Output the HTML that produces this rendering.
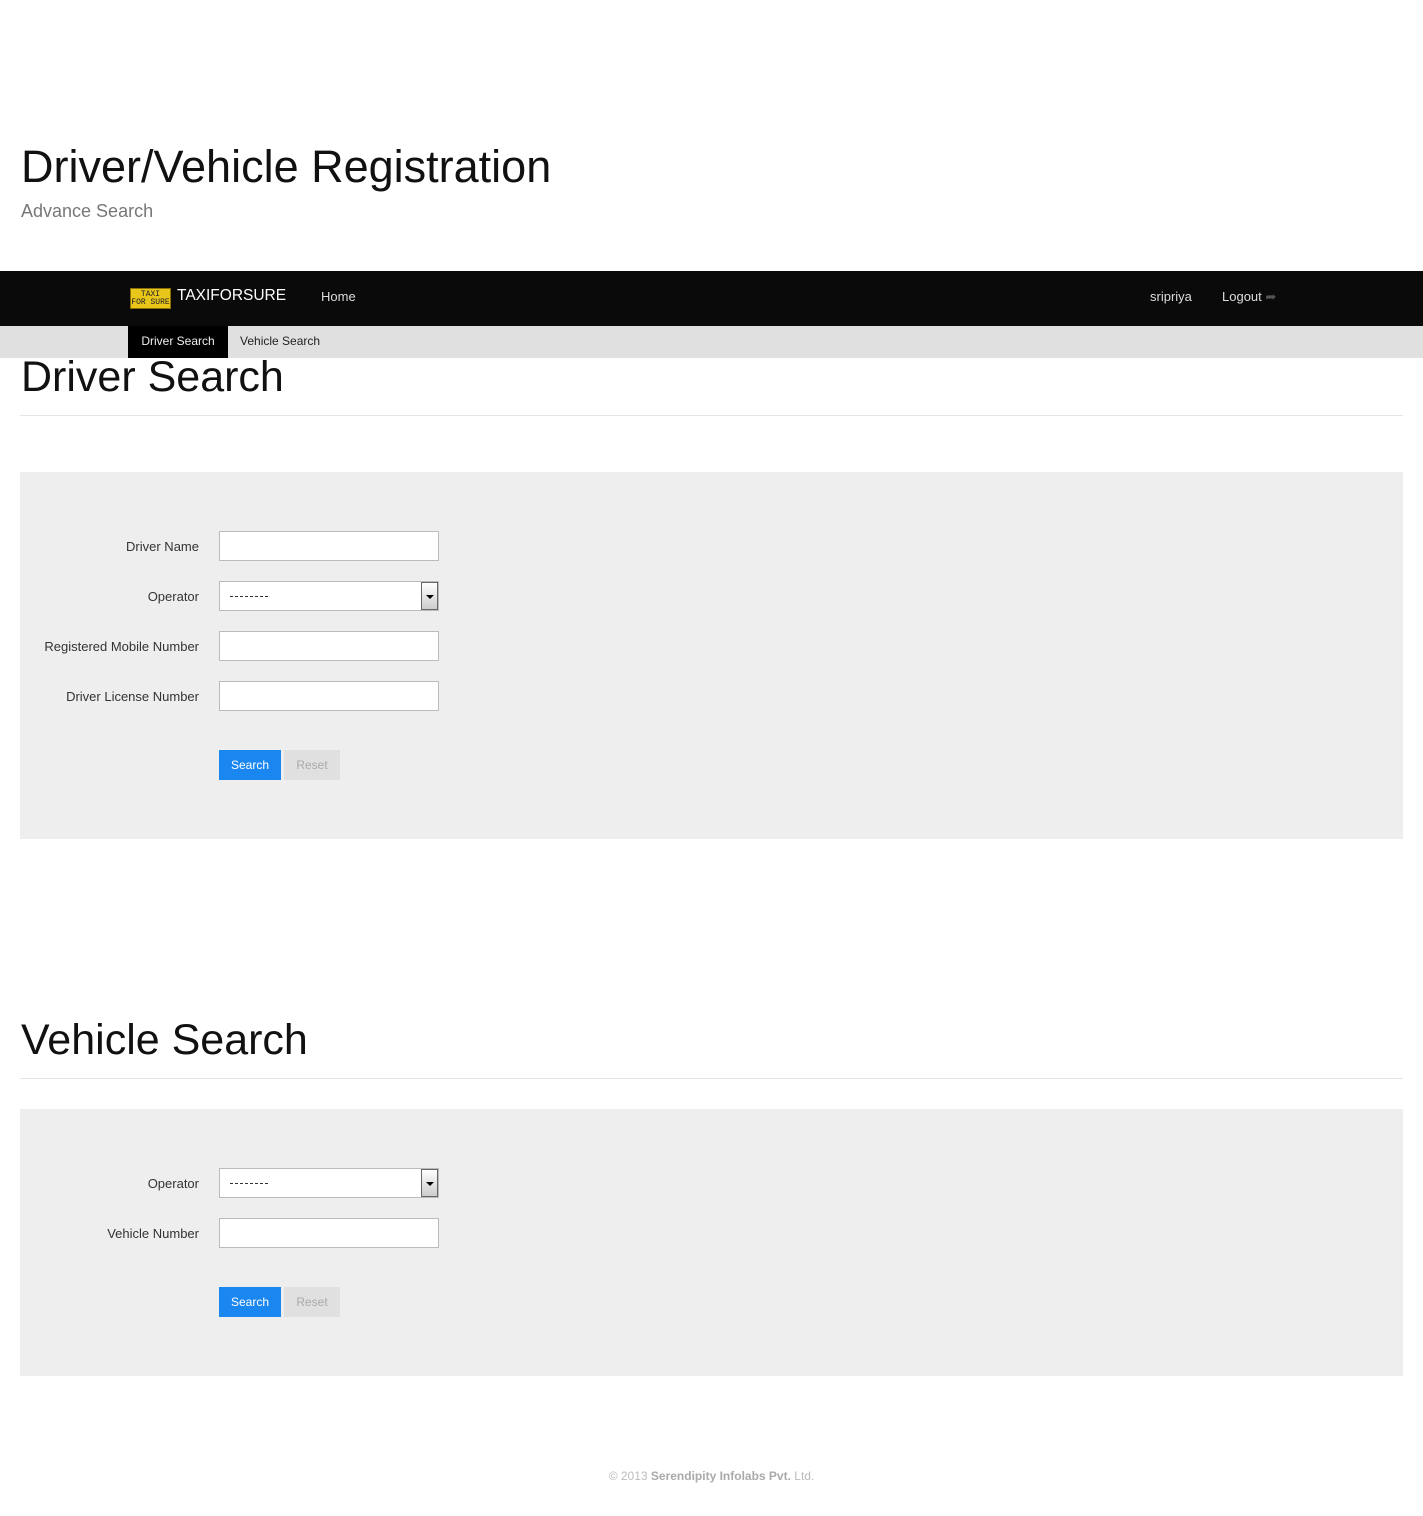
<!DOCTYPE html>
<html><head><style>
*{margin:0;padding:0;box-sizing:border-box}
body{width:1423px;height:1516px;background:#fff;font-family:"Liberation Sans",sans-serif;position:relative;overflow:hidden}
.abs{position:absolute}
h1{position:absolute;font-weight:normal;color:#111;white-space:nowrap}
.lbl{position:absolute;font-size:13px;color:#333;text-align:right;width:180px;left:19px;white-space:nowrap}
.inp{position:absolute;left:219px;width:220px;height:30px;background:#fff;border:1px solid #bbb}
.sel .arr{position:absolute;right:0;top:0;width:17px;height:28px;border:1px solid #666;background:linear-gradient(#fff,#ccc)}
.sel .arr:after{content:"";position:absolute;left:4px;top:12px;border:4px solid transparent;border-top:4px solid #000;border-bottom:0}
.sel .dash{position:absolute;left:10px;top:14px;width:38px;border-top:1px dashed #333}
.btn{position:absolute;height:30px;font-size:12px;line-height:30px;text-align:center}
</style></head><body>
<h1 style="left:21px;top:141px;font-size:45px">Driver/Vehicle Registration</h1>
<div class="abs" style="left:21px;top:201px;font-size:18px;color:#777">Advance Search</div>
<div class="abs" style="left:0;top:271px;width:1423px;height:55px;background:#0a0a0a"></div>
<div class="abs" style="left:130px;top:288px;width:41px;height:21px;background:#e8c61a;border:1px solid #8a7000;font-size:8px;line-height:8px;text-align:center;color:#222;font-family:'Liberation Mono',monospace;padding-top:2px">TAXI<br>FOR SURE</div>
<div class="abs" style="left:177px;top:287px;font-size:15.5px;color:#fff">TAXIFORSURE</div>
<div class="abs" style="left:321px;top:289px;font-size:13px;color:#ddd">Home</div>
<div class="abs" style="left:1150px;top:289px;font-size:13px;color:#ddd">sripriya</div>
<div class="abs" style="left:1222px;top:289px;font-size:13px;color:#ddd">Logout <span style="color:#555">&#10150;</span></div>
<div class="abs" style="left:0;top:326px;width:1423px;height:32px;background:#e0e0e0"></div>
<div class="abs" style="left:128px;top:326px;width:100px;height:32px;background:#000;color:#eee;font-size:12px;line-height:30px;text-align:center">Driver Search</div>
<div class="abs" style="left:240px;top:326px;height:32px;color:#222;font-size:12px;line-height:30px">Vehicle Search</div>
<h1 style="left:21px;top:353px;font-size:43px">Driver Search</h1>
<div class="abs" style="left:20px;top:415px;width:1383px;border-top:1px solid #e5e5e5"></div>
<div class="abs" style="left:20px;top:472px;width:1383px;height:367px;background:#eee"></div>
<div class="lbl" style="top:539px">Driver Name</div><div class="inp" style="top:531px"></div>
<div class="lbl" style="top:589px">Operator</div><div class="inp sel" style="top:581px"><div class="dash"></div><div class="arr"></div></div>
<div class="lbl" style="top:639px">Registered Mobile Number</div><div class="inp" style="top:631px"></div>
<div class="lbl" style="top:689px">Driver License Number</div><div class="inp" style="top:681px"></div>
<div class="btn" style="left:219px;top:750px;width:62px;background:#1a87f0;color:#fff">Search</div>
<div class="btn" style="left:284px;top:750px;width:56px;background:#e0e0e0;color:#aaa">Reset</div>
<h1 style="left:21px;top:1016px;font-size:43px">Vehicle Search</h1>
<div class="abs" style="left:20px;top:1078px;width:1383px;border-top:1px solid #e5e5e5"></div>
<div class="abs" style="left:20px;top:1109px;width:1383px;height:267px;background:#eee"></div>
<div class="lbl" style="top:1176px">Operator</div><div class="inp sel" style="top:1168px"><div class="dash"></div><div class="arr"></div></div>
<div class="lbl" style="top:1226px">Vehicle Number</div><div class="inp" style="top:1218px"></div>
<div class="btn" style="left:219px;top:1287px;width:62px;background:#1a87f0;color:#fff">Search</div>
<div class="btn" style="left:284px;top:1287px;width:56px;background:#e0e0e0;color:#aaa">Reset</div>
<div class="abs" style="left:0;width:1423px;top:1469px;text-align:center;font-size:12px;color:#bbb">© 2013 <b style="color:#aaa">Serendipity Infolabs Pvt.</b> Ltd.</div>
</body></html>
